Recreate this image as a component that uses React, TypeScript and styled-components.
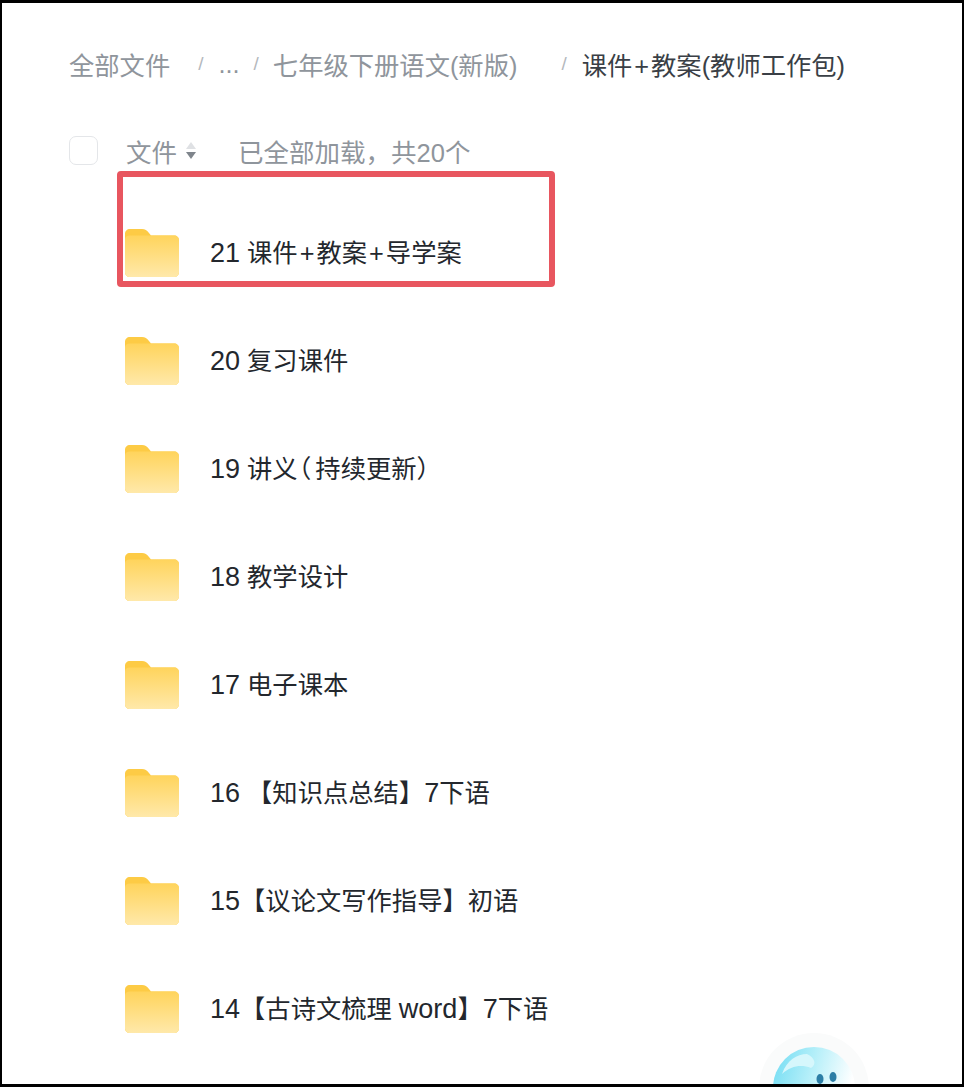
import React from 'react';
import styled, {createGlobalStyle} from "styled-components";

const GlobalStyle = createGlobalStyle`
  html, body {
    margin: 0;
    padding: 0;
    background: #000;
  }
  body {
    font-family: "Liberation Sans", "Noto Sans CJK SC", sans-serif;
  }
`
const Frame = styled.div`
  position: relative;
  box-sizing: border-box;
  width: 964px;
  height: 1087px;
  overflow: hidden;

  background: #fff;
  border-style: solid;
  border-color: #000;
  border-width: 3px 2px;
`
const Breadcrumb = styled.nav`
  display: flex;
  align-items: center;
  height: 40px;
  margin: 41px 0 0 67px;

  font-size: 25.3px;
  white-space: nowrap;
`
const Crumb = styled.span<{ $current?: boolean; $gap: number }>`
  margin-right: ${props => props.$gap}px;
  color: ${props => props.$current ? '#3a3f46' : '#8f959c'};
`
const Slash = styled.span<{ $gap: number }>`
  margin-right: ${props => props.$gap}px;
  font-size: 19px;
  color: #b4b8bd;
`
const ListHeader = styled.div`
  display: flex;
  align-items: center;
  height: 40px;
  margin: 46px 0 0 67px;

  font-size: 25.5px;
  color: #8f959c;
`
const Checkbox = styled.div`
  box-sizing: border-box;
  width: 29px;
  height: 29px;
  margin-right: 28px;

  background: #fff;
  border: 1.5px solid #e4e6e9;
  border-radius: 7px;
`
const SortIcon = styled.svg`
  width: 13px;
  height: 22px;
  margin: 1px 41px 0 7px;
`
const Rows = styled.ul`
  margin: 25px 0 0 0;
  padding: 0;
  list-style: none;
`
const Row = styled.li`
  display: flex;
  align-items: center;
  height: 108px;
  padding-left: 123px;

  font-size: 25.3px;
  color: #23272d;
  white-space: nowrap;
`
const RowLabel = styled.span`
  margin-top: 3px;
`
const FolderIcon = styled.svg`
  flex: none;
  width: 54px;
  height: 48px;
  margin: 7px 31px 0 0;
`
const Latin = styled.span`
  font-size: 27px;
`
const Plus = styled.span`
  margin: 0 2px;
`
const OpenParen = styled.span`
  margin-right: 5px;
  font-feature-settings: 'palt';
`
const Highlight = styled.div`
  position: absolute;
  top: 168px;
  left: 115px;

  box-sizing: border-box;
  width: 438px;
  height: 116px;

  border: 6px solid #e8565f;
  border-radius: 4px;
`
const Assistant = styled.svg`
  position: absolute;
  top: 1027px;
  left: 743px;

  width: 140px;
  height: 70px;
`

const files = [
  '21 课件+教案+导学案',
  '20 复习课件',
  '19 讲义（持续更新）',
  '18 教学设计',
  '17 电子课本',
  '16 【知识点总结】7下语',
  '15【议论文写作指导】初语',
  '14【古诗文梳理 word】7下语',
];

// the original font has wider latin glyphs and a narrow opening bracket
function renderLabel(label: string) {
  return label.split(/([0-9a-zA-Z]+|\+|（)/).map((part, i) => {
    if (part === '+') return <Plus key={i}>+</Plus>;
    if (part === '（') return <OpenParen key={i}>（</OpenParen>;
    if (/^[0-9a-zA-Z]+$/.test(part)) return <Latin key={i}>{part}</Latin>;
    return part;
  });
}

function Folder({id}: { id: number }) {
  return (
    <FolderIcon viewBox="0 0 54 48">
      <defs>
        <linearGradient id={`folder-${id}`} x1="0" y1="0" x2="0" y2="1">
          <stop offset="0" stopColor="#ffd45c"/>
          <stop offset="1" stopColor="#ffe9aa"/>
        </linearGradient>
      </defs>
      <path d="M5 0H17C20 0 22 1.500 24 4L26 6.500H49C52 6.500 54 8.500 54 11.500V43C54 46 52 48 49 48H5C2 48 0 46 0 43V5C0 2 2 0 5 0Z" fill="#fdcb45"/>
      <path d="M0 10.500C0 8 2 6.500 5 6.500H49C52 6.500 54 8.500 54 11.500V43C54 46 52 48 49 48H5C2 48 0 46 0 43Z" fill={`url(#folder-${id})`}/>
    </FolderIcon>
  );
}

function App() {
  return (
    <>
      <GlobalStyle/>
      <Frame>
        <Breadcrumb>
          <Crumb $gap={28}>全部文件</Crumb>
          <Slash $gap={15}>/</Slash>
          <Crumb $gap={14}>...</Crumb>
          <Slash $gap={14}>/</Slash>
          <Crumb $gap={44}>七年级下册语文(新版)</Crumb>
          <Slash $gap={15}>/</Slash>
          <Crumb $current $gap={0}>{renderLabel('课件+教案')}(教师工作包)</Crumb>
        </Breadcrumb>
        <ListHeader>
          <Checkbox/>
          <span>文件</span>
          <SortIcon viewBox="0 0 13 22">
            <path d="M7 2L12 9H2Z" fill="#dfe1e4"/>
            <path d="M7 19L12 12H2Z" fill="#7f858c"/>
          </SortIcon>
          <span>已全部加载，共20个</span>
        </ListHeader>
        <Rows>
          {files.map((name, i) => (
            <Row key={name}>
              <Folder id={i}/>
              <RowLabel>{renderLabel(name)}</RowLabel>
            </Row>
          ))}
        </Rows>
        <Highlight/>
        <Assistant viewBox="0 0 140 70">
          <defs>
            <linearGradient id="bubble" x1="0" y1="0" x2="1" y2="0.300">
              <stop offset="0" stopColor="#6fdcf3"/>
              <stop offset="0.5" stopColor="#b5eff9"/>
              <stop offset="1" stopColor="#ffffff"/>
            </linearGradient>
          </defs>
          <circle cx="69" cy="58" r="55" fill="#fafbfb"/>
          <circle cx="69" cy="58" r="41" fill="url(#bubble)"/>
          <path d="M37 44C42 30 52 24 62 24C70 28 72 34 66 38C56 34 46 36 37 44Z" fill="#d6f7fc"/>
          <ellipse cx="75" cy="49" rx="3.500" ry="5" fill="#2c7ea6"/>
          <ellipse cx="88" cy="47" rx="3.500" ry="5" fill="#2c7ea6"/>
        </Assistant>
      </Frame>
    </>
  );
}

export default App;
